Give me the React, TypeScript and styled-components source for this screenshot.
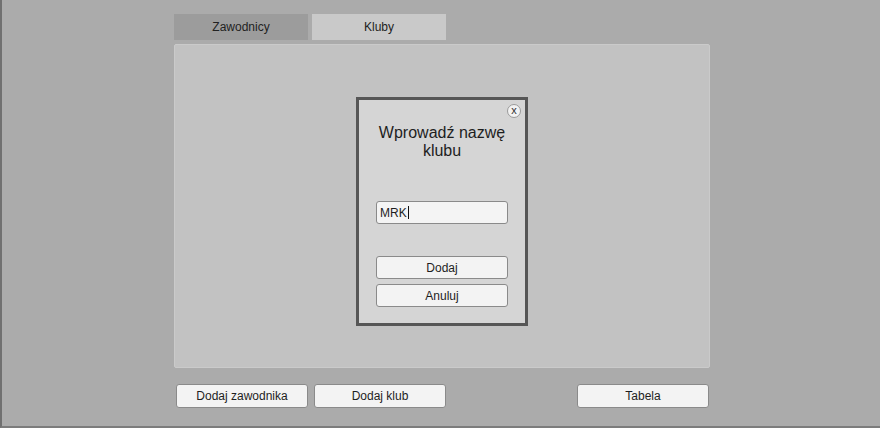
import React from "react";
import styled, { createGlobalStyle } from "styled-components";

const Global = createGlobalStyle`
  html, body { margin: 0; padding: 0; background: #ababab; }
  body { font-family: "Liberation Sans", Arial, sans-serif; color: #1e1e1e; }
`;

const Screen = styled.div`
  width: 880px;
  height: 428px;
  box-sizing: border-box;
  background: #ababab;
  border-left: 2px solid #707070;
  border-bottom: 2px solid #7c7c7c;
  padding: 14px 0 0 172px;
  display: flex;
  flex-direction: column;
`;

const Tabs = styled.div`
  display: flex;
  gap: 4px;
  height: 26px;
`;

const Tab = styled.div<{ $active?: boolean }>`
  width: 134px;
  height: 26px;
  display: flex;
  align-items: center;
  justify-content: center;
  font-size: 12px;
  color: #222;
  background: ${(p) => (p.$active ? "#9c9c9c" : "#c9c9c9")};
`;

const Panel = styled.div`
  margin-top: 4px;
  width: 536px;
  height: 324px;
  box-sizing: border-box;
  background: #c2c2c2;
  border: 1px solid #cacaca;
  border-radius: 2px;
  display: flex;
  justify-content: center;
  align-items: flex-start;
  padding-top: 52px;
`;

const Dialog = styled.div`
  position: relative;
  width: 172px;
  height: 229px;
  box-sizing: border-box;
  border: 3px solid #565656;
  background: #d5d5d5;
  display: flex;
  flex-direction: column;
  align-items: center;
  padding-top: 24px;
`;

const Close = styled.div`
  position: absolute;
  top: 4px;
  right: 4px;
  width: 14px;
  height: 14px;
  box-sizing: border-box;
  border-radius: 50%;
  background: #f2f2f2;
  border: 1px solid #9a9a9a;
  font-size: 11px;
  line-height: 11px;
  text-align: center;
  color: #333;
`;

const Title = styled.div`
  font-size: 16px;
  line-height: 18px;
  text-align: center;
  color: #1e1e1e;
`;

const Input = styled.div`
  margin-top: 41px;
  width: 132px;
  height: 23px;
  box-sizing: border-box;
  background: #f4f4f4;
  border: 1px solid #8a8a8a;
  border-radius: 3px;
  font-size: 12px;
  display: flex;
  align-items: center;
  padding-left: 3px;
  color: #1e1e1e;
`;

const Caret = styled.span`
  display: inline-block;
  width: 1px;
  height: 13px;
  background: #111;
  margin-left: 1px;
`;

const Btn = styled.div<{ $mt?: number }>`
  margin-top: ${(p) => p.$mt ?? 0}px;
  width: 132px;
  height: 23px;
  box-sizing: border-box;
  background: #f3f3f3;
  border: 1px solid #8a8a8a;
  border-radius: 3px;
  font-size: 12px;
  display: flex;
  align-items: center;
  justify-content: center;
  color: #1e1e1e;
`;

const Footer = styled.div`
  margin-top: 16px;
  padding-left: 2px;
  display: flex;
  width: 536px;
`;

const FooterBtn = styled(Btn)<{ $ml?: number }>`
  margin-left: ${(p) => p.$ml ?? 0}px;
  height: 24px;
`;

export default function App() {
  return (
    <>
      <Global />
      <Screen>
        <Tabs>
          <Tab $active>Zawodnicy</Tab>
          <Tab>Kluby</Tab>
        </Tabs>
        <Panel>
          <Dialog>
            <Close>x</Close>
            <Title>
              Wprowadź nazwę
              <br />
              klubu
            </Title>
            <Input>
              MRK<Caret />
            </Input>
            <Btn $mt={32}>Dodaj</Btn>
            <Btn $mt={5}>Anuluj</Btn>
          </Dialog>
        </Panel>
        <Footer>
          <FooterBtn>Dodaj zawodnika</FooterBtn>
          <FooterBtn $ml={6}>Dodaj klub</FooterBtn>
          <FooterBtn $ml={131}>Tabela</FooterBtn>
        </Footer>
      </Screen>
    </>
  );
}
